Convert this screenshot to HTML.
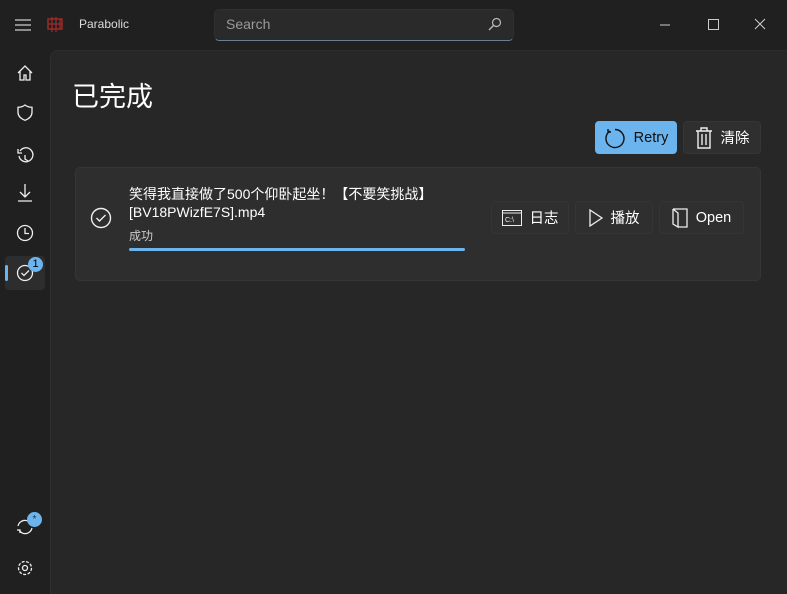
<!DOCTYPE html>
<html><head><meta charset="utf-8"><style>
*{margin:0;padding:0;box-sizing:border-box}
body{width:787px;height:594px;background:#202020;font-family:"Segoe UI","Liberation Sans","Noto Sans CJK SC",sans-serif;color:#fff;position:relative;overflow:hidden}
.abs{position:absolute}
.content{left:50px;top:50px;width:737px;height:544px;background:#272727;border-top-left-radius:8px;border-top:1px solid #2e2e2e;border-left:1px solid #2e2e2e}
.btn{position:absolute;background:#2f2f2f;border:1px solid #353535;border-radius:4px;font-size:14.5px;display:flex;align-items:center;gap:8px;justify-content:center}
svg{display:block}
</style></head><body>
<svg class="abs" style="left:15px;top:18px" width="16" height="14"><path d="M0 2h16M0 7h16M0 12h16" stroke="#ccc" stroke-width="1.2"/></svg>
<svg class="abs" style="left:47px;top:17px" width="16" height="15"><rect x="1" y="2" width="14" height="10" fill="none" stroke="#a52a2a" stroke-width="1.4"/><path d="M5 0v15M9 0v15M1 7h14M13 2v10" stroke="#a52a2a" stroke-width="1.2"/></svg>
<div class="abs" style="left:79px;top:17px;font-size:12px;color:#ddd">Parabolic</div>
<div class="abs" style="left:214px;top:9px;width:300px;height:32px;background:#2a2a2a;border:1px solid #303030;border-bottom:1px solid #6b7f90;border-radius:5px"></div>
<div class="abs" style="left:226px;top:16px;font-size:14px;color:#9a9a9a">Search</div>
<svg class="abs" style="left:488px;top:17px" width="14" height="14"><circle cx="8.5" cy="5.5" r="4" fill="none" stroke="#bbb" stroke-width="1.2"/><path d="M6 8L1 13" stroke="#bbb" stroke-width="1.3"/></svg>
<svg class="abs" style="left:655px;top:18px" width="120" height="14"><path d="M5 7h10" stroke="#ccc"/><rect x="53.5" y="1.5" width="10" height="10" fill="none" stroke="#ccc"/><path d="M100 1l10 10M110 1l-10 10" stroke="#ccc"/></svg>
<div class="abs content"></div>
<svg class="abs" style="left:16px;top:64px" width="18" height="220" fill="none" stroke="#eee" stroke-width="1.3">
<path d="M2 9L9 2l7 7M4 7v9h4v-5h2v5h4V7"/>
<path d="M9 41c-2 1.5-5 2.3-7 2.3v5c0 4 3 6.5 7 8 4-1.5 7-4 7-8v-5c-2 0-5-.8-7-2.3z"/>
<path d="M3 92a7 7 0 1 0 1-5M2 85v4h4M9 91v4l3 2"/>
<path d="M9 120v13M4 128l5 5 5-5M2 137h14"/>
<circle cx="9" cy="169" r="7.5"/><path d="M9 164v5.5h4"/>
</svg>
<div class="abs" style="left:5px;top:256px;width:40px;height:34px;background:#2d2d2d;border-radius:4px"></div>
<div class="abs" style="left:5px;top:265px;width:3px;height:16px;background:#6cb4ee;border-radius:2px"></div>
<svg class="abs" style="left:16px;top:263px" width="18" height="20" fill="none" stroke="#eee" stroke-width="1.3"><circle cx="9" cy="10" r="7.5"/><path d="M5.5 10l2.5 2.5 5-5"/></svg>
<div class="abs" style="left:28px;top:257px;width:15px;height:15px;border-radius:50%;background:#6cb4ee;color:#000;font-size:11px;text-align:center;line-height:15px">1</div>
<svg class="abs" style="left:15px;top:517px" width="20" height="20" fill="none" stroke="#eee" stroke-width="1.3"><path d="M3 9a7 7 0 0 1 13-2M17 11a7 7 0 0 1-13 2M2 13h3v3"/></svg>
<div class="abs" style="left:27px;top:512px;width:15px;height:15px;border-radius:50%;background:#6cb4ee;color:#333;font-size:10px;text-align:center;line-height:15px">*</div>
<svg class="abs" style="left:16px;top:559px" width="18" height="18" fill="none" stroke="#eee" stroke-width="1.3"><circle cx="9" cy="9" r="2.5"/><circle cx="9" cy="9" r="6.5" stroke-dasharray="3 1.5"/></svg>
<div class="abs" style="left:72px;top:75px;font-size:27px">已完成</div>
<div class="btn" style="left:595px;top:121px;width:82px;height:33px;background:#6cb4ee;border-color:#6cb4ee;color:#111"><svg width="22" height="22" fill="none" stroke="#111" stroke-width="1.4"><path d="M6 4a9 9 0 1 0 5-1.5M4 2v3h3"/></svg>Retry</div>
<div class="btn" style="left:683px;top:121px;width:78px;height:33px"><svg width="18" height="22" fill="none" stroke="#eee" stroke-width="1.4"><path d="M1 4h16M6 4V1h6v3M3 4v17h12V4M7 7v11M11 7v11"/></svg>清除</div>
<div class="abs" style="left:75px;top:167px;width:686px;height:114px;background:#2e2e2e;border:1px solid #353535;border-radius:5px"></div>
<svg class="abs" style="left:90px;top:207px" width="22" height="22" fill="none" stroke="#eee" stroke-width="1.4"><circle cx="11" cy="11" r="9.5"/><path d="M6.5 11l3 3 6-6"/></svg>
<div class="abs" style="left:129px;top:185px;font-size:14px;line-height:18px;width:340px">笑得我直接做了500个仰卧起坐！【不要笑挑战】<br>[BV18PWizfE7S].mp4</div>
<div class="abs" style="left:129px;top:227px;font-size:12px;color:#ccc">成功</div>
<div class="abs" style="left:129px;top:248px;width:336px;height:3px;background:#6cb4ee;border-radius:2px"></div>
<div class="btn" style="left:491px;top:201px;width:78px;height:33px"><svg width="20" height="16" fill="none" stroke="#eee"><rect x=".5" y=".5" width="19" height="15"/><path d="M.5 3h19"/><text x="3" y="12" font-size="7" fill="#eee" stroke="none" font-family="Liberation Sans">C:\</text></svg>日志</div>
<div class="btn" style="left:575px;top:201px;width:78px;height:33px"><svg width="14" height="18" fill="none" stroke="#eee" stroke-width="1.3"><path d="M1 1l12 8-12 8z"/></svg>播放</div>
<div class="btn" style="left:659px;top:201px;width:85px;height:33px"><svg width="16" height="20" fill="none" stroke="#eee" stroke-width="1.3"><path d="M1 1h14v18H6M1 1v15l5 3V5L1 1"/></svg>Open</div>
</body></html>
